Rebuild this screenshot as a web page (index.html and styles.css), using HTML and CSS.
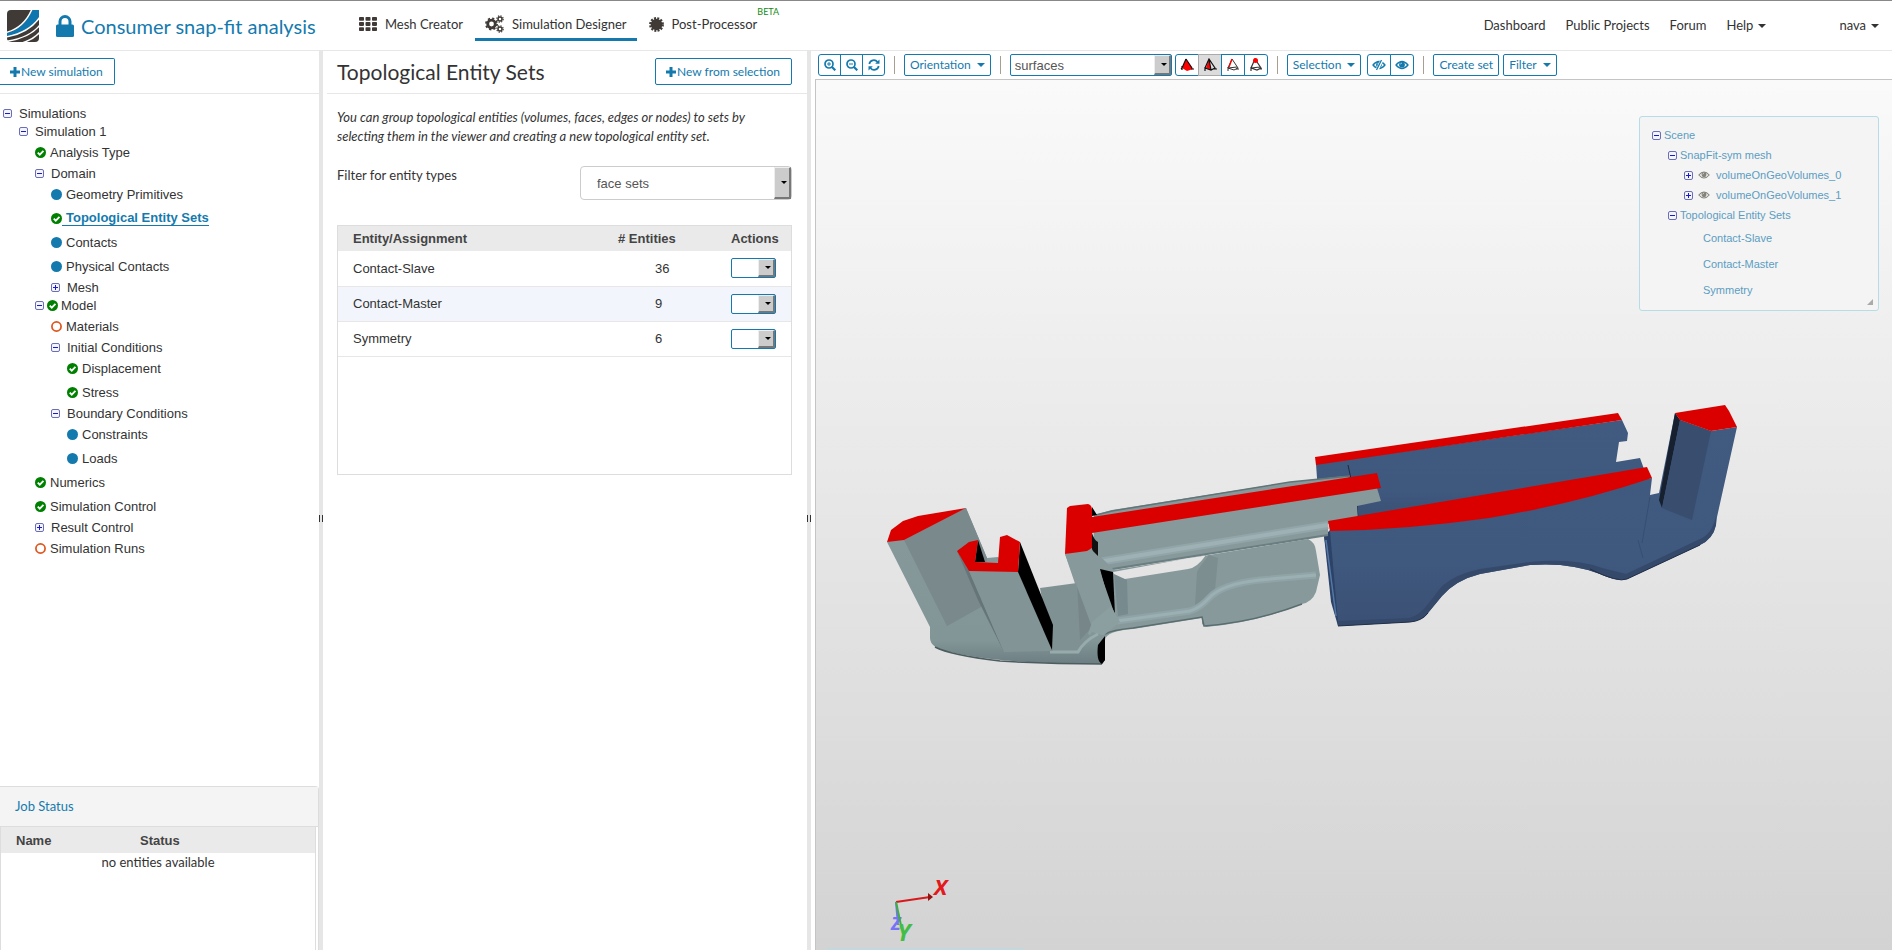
FILE: index.html
```
<!DOCTYPE html>
<html lang="en">
<head>
  <meta charset="UTF-8" />
  <meta name="viewport" content="width=device-width, initial-scale=1.0" />
  <title>Consumer snap-fit analysis</title>
  <link rel="stylesheet" href="styles.css">
</head>
<body>
  <!-- shared icons -->
  <svg class="sprite" aria-hidden="true">
    <symbol id="i-check" viewBox="0 0 12 12"><circle cx="6" cy="6" r="6" fill="#008000"/><path d="M3 6.100l2.200 2.200 4-4" fill="none" stroke="#fff" stroke-width="2"/></symbol>
    <symbol id="i-dot" viewBox="0 0 12 12"><circle cx="6" cy="6" r="6" fill="#147aae"/></symbol>
    <symbol id="i-ring" viewBox="0 0 12 12"><circle cx="6" cy="6" r="5" fill="#fff" stroke="#e0561f" stroke-width="1.900"/></symbol>
    <symbol id="i-plus" viewBox="0 0 10 10"><path d="M3.500 0h3v3.500H10v3H6.500V10h-3V6.500H0v-3h3.500z" fill="currentColor"/></symbol>
    <symbol id="i-eye" viewBox="0 0 14 10"><path d="M1 5Q7-2 13 5Q7 12 1 5z" fill="none" stroke="currentColor" stroke-width="1.300"/><circle cx="7" cy="4.700" r="2.900" fill="currentColor"/><path d="M5.500 4.300Q5.600 3.200 6.800 3.100" fill="none" stroke="#fff" stroke-width=".7"/></symbol>
  </svg>

  <header class="navbar">
    <a class="logo" href="#" aria-label="Home">
      <svg width="32" height="32" viewBox="0 0 32 32">
        <path d="M4 0h28v28q0 4-4 4H4q-4 0-4-4V4q0-4 4-4z" fill="#3f3a36"/>
        <path d="M25 0h7v7Q22 23 0 27v-4Q17 19 25 0z" fill="#0d76ae"/>
        <path d="M25-1Q17 18-1 22.500M33 7Q22 23-1 27M33 15Q23 28-1 31.500M33 22Q27 29 15 33" fill="none" stroke="#fff" stroke-width="1.500"/>
      </svg>
    </a>
    <svg class="lock" width="18" height="22" viewBox="0 0 18 22"><rect y="9.500" width="18" height="12.500" rx="1.500" fill="#147aae"/><path d="M4 10V6.500a5 5 0 0 1 10 0V10" fill="none" stroke="#147aae" stroke-width="3"/></svg>
    <a class="project" href="#">Consumer snap-fit analysis</a>

    <nav class="tabs">
      <a class="tab" href="#">
        <svg width="18" height="14" viewBox="0 0 18 14" fill="#3f3a36"><rect width="5" height="3.800" rx=".8"/><rect x="6.500" width="5" height="3.800" rx=".8"/><rect x="13" width="5" height="3.800" rx=".8"/><rect y="5.100" width="5" height="3.800" rx=".8"/><rect x="6.500" y="5.100" width="5" height="3.800" rx=".8"/><rect x="13" y="5.100" width="5" height="3.800" rx=".8"/><rect y="10.200" width="5" height="3.800" rx=".8"/><rect x="6.500" y="10.200" width="5" height="3.800" rx=".8"/><rect x="13" y="10.200" width="5" height="3.800" rx=".8"/></svg>
        Mesh Creator
      </a>
      <a class="tab active" href="#">
        <svg width="19" height="18" viewBox="0 0 19 18" fill="none" stroke="#3f3a36">
          <circle cx="6.500" cy="9" r="3.800" stroke-width="2.800"/><circle cx="6.500" cy="9" r="5.600" stroke-width="1.700" stroke-dasharray="2.200 2.200"/>
          <circle cx="15" cy="4" r="2" stroke-width="1.500"/><circle cx="15" cy="4" r="3.200" stroke-width="1.200" stroke-dasharray="1.260 1.260"/>
          <circle cx="15" cy="14" r="2" stroke-width="1.500"/><circle cx="15" cy="14" r="3.200" stroke-width="1.200" stroke-dasharray="1.260 1.260"/>
        </svg>
        Simulation Designer
      </a>
      <a class="tab" href="#">
        <svg width="15" height="15" viewBox="0 0 15 15"><circle cx="7.500" cy="7.500" r="5.800" fill="#3f3a36"/><circle cx="7.500" cy="7.500" r="6.300" fill="none" stroke="#3f3a36" stroke-width="2.200" stroke-dasharray="1.980 1.320"/></svg>
        Post-Processor<span class="beta">BETA</span>
      </a>
    </nav>

    <nav class="links">
      <a href="#">Dashboard</a>
      <a href="#">Public Projects</a>
      <a href="#">Forum</a>
      <a class="caret" href="#">Help</a>
      <a class="caret user" href="#">nava</a>
    </nav>
  </header>

  <main class="workbench">
    <aside class="sidebar">
      <div class="panel-bar">
        <button class="btn btn-flush"><svg width="10" height="10"><use href="#i-plus"/></svg>New simulation</button>
      </div>

      <ul class="tree">
        <li><div class="folder"><button class="toggle" aria-label="Collapse"></button><span>Simulations</span></div>
          <ul>
            <li><div class="folder"><button class="toggle" aria-label="Collapse"></button><span>Simulation 1</span></div>
              <ul>
                <li class="leaf"><svg><use href="#i-check"/></svg><a href="#">Analysis Type</a></li>
                <li><div class="folder"><button class="toggle" aria-label="Collapse"></button><span>Domain</span></div>
                  <ul>
                    <li class="leaf"><svg><use href="#i-dot"/></svg><a href="#">Geometry Primitives</a></li>
                    <li class="leaf selected"><svg><use href="#i-check"/></svg><a href="#">Topological Entity Sets</a></li>
                    <li class="leaf"><svg><use href="#i-dot"/></svg><a href="#">Contacts</a></li>
                    <li class="leaf"><svg><use href="#i-dot"/></svg><a href="#">Physical Contacts</a></li>
                    <li><div class="folder"><button class="toggle closed" aria-label="Expand"></button><span>Mesh</span></div></li>
                  </ul>
                </li>
                <li><div class="folder with-status"><button class="toggle" aria-label="Collapse"></button><svg><use href="#i-check"/></svg><a href="#">Model</a></div>
                  <ul>
                    <li class="leaf"><svg><use href="#i-ring"/></svg><a href="#">Materials</a></li>
                    <li><div class="folder"><button class="toggle" aria-label="Collapse"></button><span>Initial Conditions</span></div>
                      <ul>
                        <li class="leaf"><svg><use href="#i-check"/></svg><a href="#">Displacement</a></li>
                        <li class="leaf"><svg><use href="#i-check"/></svg><a href="#">Stress</a></li>
                      </ul>
                    </li>
                    <li><div class="folder"><button class="toggle" aria-label="Collapse"></button><span>Boundary Conditions</span></div>
                      <ul>
                        <li class="leaf"><svg><use href="#i-dot"/></svg><a href="#">Constraints</a></li>
                        <li class="leaf"><svg><use href="#i-dot"/></svg><a href="#">Loads</a></li>
                      </ul>
                    </li>
                  </ul>
                </li>
                <li class="leaf"><svg><use href="#i-check"/></svg><a href="#">Numerics</a></li>
                <li class="leaf"><svg><use href="#i-check"/></svg><a href="#">Simulation Control</a></li>
                <li><div class="folder"><button class="toggle closed" aria-label="Expand"></button><span>Result Control</span></div></li>
                <li class="leaf"><svg><use href="#i-ring"/></svg><a href="#">Simulation Runs</a></li>
              </ul>
            </li>
          </ul>
        </li>
      </ul>

      <section class="jobs">
        <h2><a href="#">Job Status</a></h2>
        <div class="jobs-body">
          <table>
            <thead><tr><th>Name</th><th>Status</th></tr></thead>
            <tbody><tr><td colspan="2">no entities available</td></tr></tbody>
          </table>
        </div>
      </section>
    </aside>

    <div class="splitter"></div>

    <section class="details">
      <div class="panel-bar">
        <h1>Topological Entity Sets</h1>
        <button class="btn"><svg width="10" height="10"><use href="#i-plus"/></svg>New from selection</button>
      </div>
      <div class="details-body">
        <p class="hint">You can group topological entities (volumes, faces, edges or nodes) to sets by selecting them in the viewer and creating a new topological entity set.</p>
        <div class="filter">
          <label for="entity-type">Filter for entity types</label>
          <div class="select select-lg"><select id="entity-type"><option>face sets</option></select></div>
        </div>
        <div class="grid">
          <table>
            <thead><tr><th>Entity/Assignment</th><th># Entities</th><th>Actions</th></tr></thead>
            <tbody>
              <tr><td>Contact-Slave</td><td>36</td><td><div class="select select-sm"><select aria-label="Actions for Contact-Slave"><option></option></select></div></td></tr>
              <tr><td>Contact-Master</td><td>9</td><td><div class="select select-sm"><select aria-label="Actions for Contact-Master"><option></option></select></div></td></tr>
              <tr><td>Symmetry</td><td>6</td><td><div class="select select-sm"><select aria-label="Actions for Symmetry"><option></option></select></div></td></tr>
            </tbody>
          </table>
        </div>
      </div>
    </section>

    <div class="splitter"></div>

    <section class="viewer">
      <div class="toolbar">
        <div class="group">
          <button aria-label="Zoom in"><svg width="12" height="12" viewBox="0 0 12 12" fill="none" stroke="currentColor"><circle cx="5" cy="5" r="4" stroke-width="1.700"/><path d="M8 8l3.300 3.300" stroke-width="2.200"/><path d="M3 5h4M5 3v4"/></svg></button>
          <button aria-label="Zoom out"><svg width="12" height="12" viewBox="0 0 12 12" fill="none" stroke="currentColor"><circle cx="5" cy="5" r="4" stroke-width="1.700"/><path d="M8 8l3.300 3.300" stroke-width="2.200"/><path d="M3 5h4"/></svg></button>
          <button aria-label="Refresh"><svg width="12" height="12" viewBox="0 0 12 12" fill="none" stroke="currentColor" stroke-width="1.700"><path d="M1.300 5A4.600 4.600 0 0 1 9.500 3M10.700 7A4.600 4.600 0 0 1 2.500 9"/><path d="M11.500.5v4.300H7.200zM.5 11.500V7.200h4.300z" fill="currentColor" stroke="none"/></svg></button>
        </div>
        <span class="sep"></span>
        <button class="btn-tool caret">Orientation</button>
        <span class="sep"></span>
        <div class="select select-mode"><select aria-label="Render mode"><option>surfaces</option></select></div>
        <div class="group pick">
          <button aria-label="Pick volumes"><svg width="14" height="14" viewBox="0 0 14 14"><path d="M6 1L2 10l5 3 6-2z" fill="#f00"/><path d="M6 1L2 10l-1 1M6 1l6 9M2 8v4M11 11h3" fill="none" stroke="#111" stroke-width="1.200"/></svg></button>
          <button class="on" aria-label="Pick faces"><svg width="14" height="14" viewBox="0 0 14 14"><path d="M6 1L3 10l5 2z" fill="#f00"/><path d="M6 1L2 10l6 2 4-2zM2 9v4M8 12L6 1M10 11h4" fill="none" stroke="#111" stroke-width="1.200"/></svg></button>
          <button aria-label="Pick edges"><svg width="14" height="14" viewBox="0 0 14 14"><path d="M6 1L2 10l6 2 4-2zM2 9v4M2 10l9-1M10 11h3" fill="none" stroke="#333"/><path d="M6 1L3 9" stroke="#f00" stroke-width="1.400"/></svg></button>
          <button aria-label="Pick nodes"><svg width="14" height="14" viewBox="0 0 14 14"><path d="M6 1L2 10l6 2 4-2zM2 9v4M2 10l9-1M10 11h3" fill="none" stroke="#333" stroke-width="1.200"/><circle cx="6.500" cy="2.500" r="2.500" fill="#f00"/></svg></button>
        </div>
        <span class="sep"></span>
        <button class="btn-tool caret">Selection</button>
        <div class="group eyes">
          <button aria-label="Hide selection"><svg width="14" height="10"><use href="#i-eye"/></svg><svg class="slash" width="14" height="10" viewBox="0 0 14 10"><path d="M10 0L5 10" stroke="#fff" stroke-width="3"/><path d="M9.500 0L4.500 10" stroke="currentColor" stroke-width="1.200"/></svg></button>
          <button aria-label="Show all"><svg width="14" height="10"><use href="#i-eye"/></svg></button>
        </div>
        <span class="sep"></span>
        <div class="pair">
          <button class="btn-tool">Create set</button>
          <button class="btn-tool caret">Filter</button>
        </div>
      </div>

      <div class="canvas">
        <svg class="model" viewBox="816 80 1076 870" preserveAspectRatio="xMinYMin meet">
          <defs>
            <linearGradient id="steel" x1="0" y1="0" x2="0" y2="1"><stop offset="0" stop-color="#405a80"/><stop offset=".7" stop-color="#3f587e"/><stop offset="1" stop-color="#3b5074"/></linearGradient>
            <linearGradient id="base" x1="0" y1="0" x2="0" y2="1"><stop offset="0" stop-color="#87999b"/><stop offset=".85" stop-color="#829597"/><stop offset="1" stop-color="#6c7e81"/></linearGradient>
          </defs>

          <!-- receiver, rear wall and catch -->
          <g fill="url(#steel)">
            <path d="M1316 464L1622 420L1628 433L1627 441L1619 442L1616 462L1640 458L1648 480L1357 520L1318 492z"/>
            <path d="M1675 413L1680 420L1711 431L1737 427L1717 517L1716 525Q1713 539 1700 545L1627 579Q1618 582 1600 574Q1570 562 1530 565L1480 574Q1456 580 1442 596L1428 613Q1422 621 1410 622L1338 626L1324 536L1330 530L1652 478L1650 495L1659 493z"/>
          </g>
          <path d="M1348 465l3 14M1357 506l1 12" stroke="#1b2940" fill="none"/>
          <path d="M1327 533L1330 531L1338 621V626L1331 602L1324 536z" fill="#2c4367"/>
          <path d="M1326 540L1336 616" stroke="#5577a6" stroke-width="1.500"/>
          <path d="M1338 621L1409 618Q1419 616 1428 604L1442 586Q1456 574 1480 569L1530 562Q1575 558 1602 568L1626 574L1700 539Q1711 535 1716 517V525Q1713 539 1700 545L1627 579Q1618 582 1600 574Q1570 562 1530 565L1480 574Q1456 580 1442 596L1428 613Q1422 621 1410 622L1338 626z" fill="#35496b"/>
          <path d="M1338 626L1410 622Q1422 621 1428 613M1590 569Q1618 583 1627 579L1700 545" fill="none" stroke="#222f48"/>
          <path d="M1638 540l5 18M1650 497L1642 543" stroke="#374e72" fill="none"/>
          <path d="M1675 413L1680 420L1662 508L1659 500z" fill="#16202f"/>
          <path d="M1680 420L1711 431L1692 520L1662 508z" fill="#394d6e"/>
          <path d="M1675 413L1725 405L1729 411L1737 427L1711 431L1680 420z" fill="#da0000"/>
          <path d="M1315 457L1618 413L1622 420L1316 465z" fill="#da0000"/>

          <!-- rail -->
          <path d="M1094 515L1112 510L1290 482L1345 476L1377 488L1381 501L1357 506L1358 520L1328 524V535L1112 570L1093 562z" fill="#87999b"/>
          <path d="M1096 515L1112 511L1290 482L1350 476" fill="none" stroke="#627477" stroke-width="1.500"/>
          <path d="M1098 562L1328 525" stroke="#92a6a9" stroke-width="8"/>
          <path d="M1098 562L1328 525" stroke="#9eb2b5" stroke-width="4"/>
          <path d="M1112 569L1328 535" stroke="#6b7f82" stroke-width="2"/>
          <path d="M1092 517L1377 473L1381 488L1092 533z" fill="#da0000"/>
          <path d="M1328 521L1647 467L1652 478Q1575 504 1489 518Q1405 530 1330 531z" fill="#da0000"/>

          <!-- snap grip -->
          <path fill-rule="evenodd" d="M1065 554L1092 548L1114 570L1209 555L1308 539Q1315 542 1316 551L1320 575L1316 592Q1312 602 1302 604Q1255 623 1206 627L1202 624V618L1133 629Q1106 631 1105 640V660L1102 664L1060 655L1085 640L1090 628zM1113 572Q1115 579 1125 579L1188 569Q1197 568 1206 555z" fill="#87999b"/>
          <path d="M1209 555Q1200 566 1197 572L1195 605Q1208 602 1215 590L1218 558z" fill="#7d8e91"/>
          <path d="M1114 574L1118 616L1128 614L1127 580z" fill="#778a8d"/>
          <path d="M1117 621L1190 611Q1200 608 1209 598Q1222 584 1260 580L1316 575" fill="none" stroke="#90a4a7" stroke-width="7"/>
          <path d="M1117 621L1190 611Q1200 608 1209 598Q1222 584 1260 580L1316 575" fill="none" stroke="#9bb0b3" stroke-width="3"/>
          <path d="M1105 634Q1112 630 1133 628L1202 617L1204 626Q1255 622 1302 604" fill="none" stroke="#596c6f" stroke-width="1.500"/>
          <path d="M1100 569L1113 572L1115 615L1111 610z"/>
          <path d="M1092 533Q1094 540 1098 542V556L1092 550z" fill="#111"/>
          <path d="M1092 507V516L1097 515z"/>

          <!-- latch base -->
          <path d="M1040 588L1077 583L1092 627L1105 634L1100 655L1052 655z" fill="#809193"/>
          <path d="M1077 583L1080 640L1092 627z" fill="#778789"/>
          <path d="M1065 554L1092 549L1115 615L1105 632L1092 627z" fill="#87999b"/>
          <path d="M1111 606L1120 622L1098 640L1088 634L1092 622z" fill="#8b9ea0"/>
          <path d="M887 542L966 508L987 558L998 557L1018 572L1053 651H1078Q1086 641 1092 632L1105 636V660L1102 664Q1000 664 950 652Q930 648 930 638V627z" fill="url(#base)"/>
          <path d="M1050 652H1078Q1084 641 1098 634" fill="none" stroke="#97abad" stroke-width="3"/>
          <path d="M904 540L966 508L987 558L981 607L947 626z" fill="#7a898b"/>
          <path d="M957 551L969 571L1004 652L978 600z" fill="#667678"/>
          <path d="M969 571H1018L1053 651L1004 652z" fill="#829496"/>
          <path d="M935 647Q950 655 1000 661Q1050 664 1102 664" fill="none" stroke="#4c5c5f" stroke-width="1.500"/>
          <path d="M1105 636V660L1102 664Q1096 661 1098 645z"/>
          <path d="M1020 542L1053 625L1052 650L1018 572z"/>
          <path d="M978 540L985 562H975z"/>
          <path d="M887 542L891 530L903 521L918 516L966 508L904 540z" fill="#da0000"/>
          <path d="M957 551L969 542L978 540L975 562L998 563L1000 537L1007 535L1020 542L1018 572L969 571z" fill="#da0000"/>
          <path d="M1067 508L1070 506L1088 504Q1092 505 1092 510V548L1087 551L1065 554z" fill="#da0000"/>

          <!-- orientation axes -->
          <g class="axes">
            <path d="M896 902L898 925" stroke="#7474f5" stroke-width="2"/>
            <text x="891" y="930" fill="#7474f5" font-size="18">Z</text>
            <path d="M896 902L930 897" stroke="#d8191c" stroke-width="2"/>
            <path d="M928 893L933 897L928 901z" fill="#961313"/>
            <path d="M896 902L902 930" stroke="#3fae3f" stroke-width="2"/>
            <text x="934" y="895" fill="#e3191c" font-size="22">X</text>
            <text x="897" y="941" fill="#43bd43" font-size="24">Y</text>
          </g>
        </svg>

        <div class="scene">
          <ul>
            <li><div class="node"><button class="toggle" aria-label="Collapse"></button><a href="#">Scene</a></div>
              <ul>
                <li><div class="node"><button class="toggle" aria-label="Collapse"></button><a href="#">SnapFit-sym mesh</a></div>
                  <ul>
                    <li><div class="node"><button class="toggle closed" aria-label="Expand"></button><svg width="12" height="10"><use href="#i-eye"/></svg><a href="#">volumeOnGeoVolumes_0</a></div></li>
                    <li><div class="node"><button class="toggle closed" aria-label="Expand"></button><svg width="12" height="10"><use href="#i-eye"/></svg><a href="#">volumeOnGeoVolumes_1</a></div></li>
                  </ul>
                </li>
                <li><div class="node"><button class="toggle" aria-label="Collapse"></button><a href="#">Topological Entity Sets</a></div>
                  <ul class="sets">
                    <li><a href="#">Contact-Slave</a></li>
                    <li><a href="#">Contact-Master</a></li>
                    <li><a href="#">Symmetry</a></li>
                  </ul>
                </li>
              </ul>
            </li>
          </ul>
          <span class="grip"></span>
        </div>
        <div class="console"></div>
      </div>
    </section>
  </main>
</body>
</html>
```
FILE: styles.css
```
* {
  box-sizing: border-box;
}
html, body {
  height: 100%;
  margin: 0;
  overflow: hidden;
}
body {
  display: flex;
  flex-direction: column;
  background: #fff;
  color: #333;
  font-family: Lato, sans-serif;
  font-size: 13px;
  line-height: 19px;
}
a {
  color: inherit;
  text-decoration: none;
}
ul {
  list-style: none;
  margin: 0;
  padding: 0;
}
h1, h2, p {
  margin: 0;
  font-weight: normal;
}
table {
  width: 100%;
  border-collapse: collapse;
  table-layout: fixed;
}
button {
  font-family: inherit;
  cursor: pointer;
}
.sprite {
  position: absolute;
  width: 0;
  height: 0;
}

/* top bar */
.navbar {
  display: flex;
  align-items: center;
  flex: none;
  height: 51px;
  padding: 0 13px 0 7px;
  border-top: 1px solid #888;
  border-bottom: 1px solid #e7e7e7;
}
.logo, .lock {
  display: block;
  flex: none;
}
.logo svg {
  display: block;
}
.lock {
  margin: 0 7px 0 17px;
}
.project {
  width: 278px;
  color: #147aae;
  font-size: 20px;
  line-height: 24px;
  white-space: nowrap;
}
.tabs, .links {
  display: flex;
}
.tab {
  display: flex;
  align-items: center;
  gap: 8px;
  height: 30px;
  padding: 0 12px;
  white-space: nowrap;
  border-bottom: 3px solid transparent;
}
.tab:first-child {
  padding-left: 0;
}
.tab.active {
  padding: 0 10px;
  border-color: #147aae;
}
.beta {
  align-self: flex-start;
  margin: -4px 0 0 -8px;
  color: #128a12;
  font-size: 9px;
  line-height: 10px;
}
.links {
  gap: 20px;
  margin-left: auto;
}
.user {
  margin-left: 53px;
}
.caret::after {
  content: "";
  display: inline-block;
  margin-left: 5px;
  vertical-align: 2px;
  border: 4px solid transparent;
  border-top-color: currentColor;
  border-bottom: 0;
}

.workbench {
  display: grid;
  grid-template-columns: 319px 4px 484px 4px minmax(0, 1fr);
  flex: 1;
  min-height: 0;
}
.splitter {
  display: flex;
  align-items: center;
  justify-content: center;
  background: #e6e6e6;
}
.splitter::before {
  content: "";
  width: 3px;
  height: 7px;
  margin-top: 35px;
  border: solid #333;
  border-width: 0 1px;
}
.panel-bar {
  display: flex;
  align-items: center;
  justify-content: space-between;
  height: 43px;
  padding-bottom: 1px;
  border-bottom: 1px solid #e7e7e7;
}
.btn {
  display: flex;
  align-items: center;
  gap: 1px;
  height: 27px;
  padding: 0 11px 0 10px;
  border: 1px solid #147aae;
  border-radius: 2px;
  background: #fff;
  color: #147aae;
  font-size: 12px;
  line-height: 18px;
}
.btn-flush {
  border-left-width: 0;
  border-radius: 0 2px 2px 0;
}

/* simulation tree */
.sidebar {
  display: flex;
  flex-direction: column;
  min-height: 0;
}
.tree {
  flex: 1;
  min-height: 0;
  padding: 10px 0 0 3px;
  font-family: "Liberation Sans", Arial, sans-serif;
  font-size: 13px;
  line-height: 15px;
  white-space: nowrap;
}
.tree ul, .scene ul ul {
  padding-left: 16px;
}
.folder, .leaf {
  display: flex;
  align-items: center;
}
.folder {
  gap: 7px;
  height: 18px;
}
.folder.with-status {
  gap: 3px;
}
.leaf {
  height: 24px;
}
.leaf svg, .folder svg {
  width: 11px;
  height: 11px;
}
.leaf a {
  padding-left: 4px;
}
.leaf.selected a {
  color: #147aae;
  font-weight: bold;
  border-bottom: 1px solid #147aae;
}
.toggle {
  flex: none;
  width: 9px;
  height: 9px;
  padding: 0;
  border: 1px solid #6a6fb5;
  border-radius: 2px;
  background: linear-gradient(#1a1acc, #1a1acc) center / 5px 1px no-repeat #f4f5fc;
}
.toggle.closed {
  background: linear-gradient(#1a1acc, #1a1acc) center / 5px 1px no-repeat, linear-gradient(#1a1acc, #1a1acc) center / 1px 5px no-repeat #f4f5fc;
}

/* job status */
.jobs {
  display: flex;
  flex-direction: column;
  flex: none;
  height: 164px;
  border: solid #ddd;
  border-width: 1px 1px 0 0;
  border-radius: 0 4px 0 0;
}
.jobs h2 {
  padding: 10px 15px;
  border-bottom: 1px solid #ddd;
  background: #f4f4f4;
  color: #147aae;
  font-size: 13px;
}
.jobs-body {
  flex: 1;
  margin-right: 2px;
  border: solid #ddd;
  border-width: 0 1px;
}
.jobs th, .grid th {
  height: 26px;
  padding: 0;
  background: #eaeaea;
  color: #444;
  font: bold 13px/15px "Liberation Sans", Arial, sans-serif;
  text-align: left;
}
.jobs th {
  padding-left: 15px;
}
.jobs th:first-child {
  width: 124px;
}
.jobs td {
  padding: 0;
  text-align: center;
}

/* entity sets */
.details .panel-bar {
  margin-left: 4px;
  padding: 0 15px 1px 10px;
}
.details h1 {
  font-size: 21px;
  line-height: 26px;
}
.details-body {
  padding: 14px 15px 0 14px;
}
.hint {
  font-style: italic;
}
.filter {
  display: flex;
  justify-content: space-between;
  margin-top: 20px;
}
.select {
  position: relative;
  flex: none;
}
.select select {
  display: block;
  width: 100%;
  height: 100%;
  padding: 0 4px;
  appearance: none;
  border: 1px solid #147aae;
  border-radius: 2px;
  background: #fff;
  color: #555;
  font: 13px "Liberation Sans", Arial, sans-serif;
}
.select::before {
  content: "";
  position: absolute;
  top: 1px;
  right: 1px;
  bottom: 1px;
  width: 14px;
  border: 1px solid #eee;
  border-right: 2px solid #777;
  border-bottom: 2px solid #777;
  background: #ccc;
  pointer-events: none;
}
.select::after {
  content: "";
  position: absolute;
  top: calc(50% - 2px);
  right: 5px;
  border: 3px solid transparent;
  border-top-color: #000;
  border-bottom: 0;
  pointer-events: none;
}
.select-lg {
  width: 212px;
  height: 34px;
}
.select-lg select {
  padding: 0 16px;
  border-color: #ccc;
  border-radius: 4px;
}
.select-sm {
  width: 45px;
  height: 20px;
}
.select-mode {
  width: 162px;
  height: 22px;
}
.grid {
  min-height: 250px;
  margin-top: 25px;
  border: 1px solid #ddd;
}
.grid th {
  height: 25px;
}
.grid th:first-child, .grid td:first-child {
  padding-left: 15px;
}
.grid th:nth-child(2) {
  width: 113px;
}
.grid td:nth-child(2) {
  padding-left: 37px;
}
.grid th:last-child {
  width: 60px;
}
.grid td {
  height: 35px;
  padding: 0;
  border-bottom: 1px solid #e7e7e7;
  font: 13px/15px "Liberation Sans", Arial, sans-serif;
}
.grid tbody tr:nth-child(2) {
  background: #f2f5fb;
}

/* viewer */
.viewer {
  display: flex;
  flex-direction: column;
  min-width: 0;
  min-height: 0;
}
.toolbar {
  display: flex;
  align-items: center;
  flex: none;
  height: 28px;
  padding: 0 7px;
}
.group {
  display: flex;
}
.group button, .btn-tool {
  height: 22px;
  border: 1px solid #147aae;
  background: #fff;
  color: #147aae;
  font-size: 12px;
  line-height: 18px;
}
.btn-tool {
  padding: 0 5px;
  border-radius: 2px;
  white-space: nowrap;
}
.group button {
  display: flex;
  align-items: center;
  justify-content: center;
  width: 23px;
  padding: 0;
}
.group button + button {
  margin-left: -1px;
}
.group button:first-child {
  border-radius: 3px 0 0 3px;
}
.group button:last-child {
  border-radius: 0 3px 3px 0;
}
.pick {
  margin-left: 3px;
}
.group.pick button {
  width: 24px;
}
.group button.on {
  border-color: #aaa;
  background: #dcdcdc;
}
.eyes {
  margin-left: 6px;
}
.group.eyes button {
  width: 24px;
}
.slash {
  margin-left: -14px;
}
.btn-tool.caret::after {
  margin-left: 6px;
}
.sep {
  width: 1px;
  height: 18px;
  margin: 0 9px;
  background: #a89f90;
}
.pair {
  display: flex;
  gap: 4px;
}
.canvas {
  position: relative;
  flex: 1;
  min-height: 0;
  margin-left: 4px;
  border: solid #c4c4c4;
  border-width: 1px 0 0 1px;
  background: linear-gradient(#fafafa, #d3d3d3);
}
.model {
  display: block;
  width: 100%;
  height: 100%;
}
.axes {
  font-family: "Open Sans", sans-serif;
  font-style: italic;
  font-weight: bold;
}

/* scene overlay */
.scene {
  position: absolute;
  top: 36px;
  right: 13px;
  width: 240px;
  height: 195px;
  padding: 8px 12px;
  border: 1px solid #b4dde6;
  border-radius: 3px;
  background: #f4f4f4;
  color: #5b9dc2;
  font: 11px/14px "Liberation Sans", Arial, sans-serif;
}
.node {
  display: flex;
  align-items: center;
  gap: 3px;
  height: 20px;
}
.node svg {
  margin: 0 3px 0 2px;
  color: #83837a;
}
.scene .sets {
  padding-left: 35px;
}
.sets li {
  display: flex;
  align-items: center;
  height: 26px;
}
.grip {
  position: absolute;
  right: 5px;
  bottom: 5px;
  border: 3px solid #aaa;
  border-top-color: transparent;
  border-left-color: transparent;
}
.console {
  position: absolute;
  bottom: 0;
  left: 10px;
  width: 198px;
  height: 2px;
  border-top: 1px solid #b4dde6;
  border-radius: 3px 3px 0 0;
}
```
